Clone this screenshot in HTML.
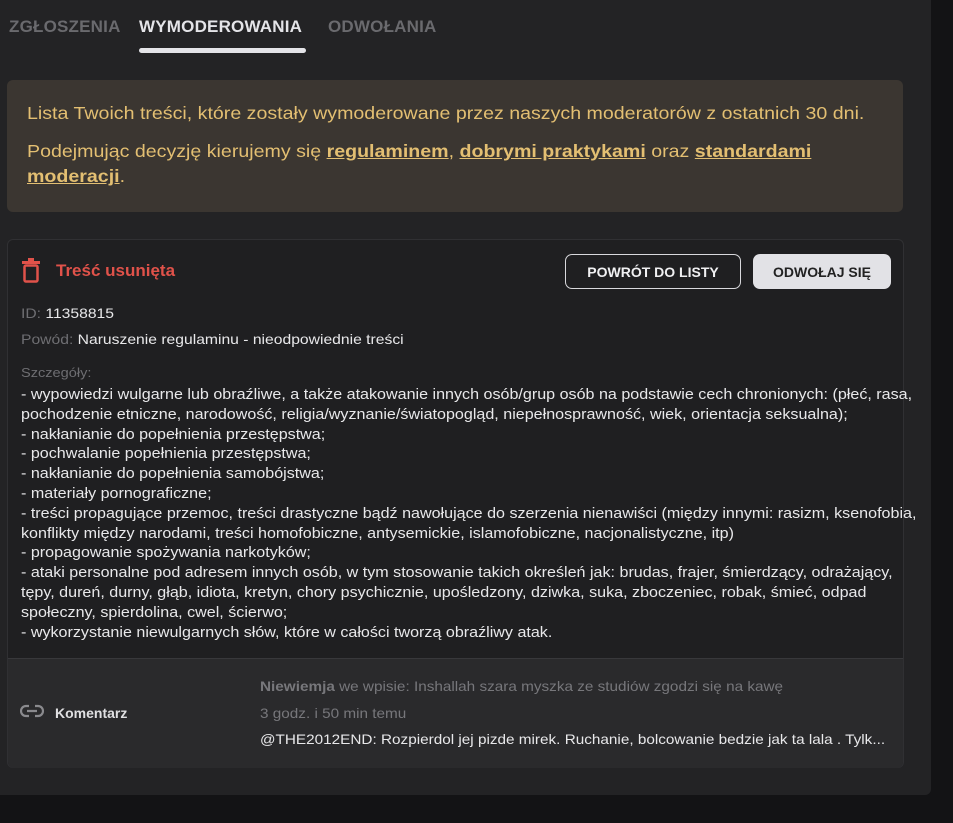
<!DOCTYPE html>
<html><head><meta charset="utf-8"><style>
*{margin:0;padding:0;box-sizing:border-box}
body{width:953px;height:823px;background:#131315;font-family:"Liberation Sans",sans-serif;overflow:hidden;position:relative}
.main{position:absolute;left:0;top:0;width:931px;height:795px;background:#232325;border-radius:0 0 6px 0}
.tab{position:absolute;top:17px;font-size:17px;font-weight:bold;color:#6a6a6e;letter-spacing:0.2px}
.info{position:absolute;left:7px;top:80px;width:896px;height:132px;background:#3b3631;border-radius:6px;color:#e3bf72;font-size:17.5px;padding:21px 20px}
.info p{line-height:25px;margin-bottom:13px;white-space:nowrap;transform:scaleX(1.12);transform-origin:left}
.info a{color:#e3bf72;font-weight:bold;text-decoration:underline}
.card{position:absolute;left:7px;top:239px;width:897px;height:529px;background:#1f1f21;border:1px solid #303033;border-radius:6px}
.title{position:absolute;left:48px;top:21px;color:#e0524a;font-size:17px;font-weight:bold}
.btn{position:absolute;top:14px;height:35px;border-radius:7px;font-size:14px;font-weight:bold;display:flex;align-items:center;justify-content:center}
.row{position:absolute;left:13px;font-size:14px;color:#e8e8ea;white-space:nowrap;transform:scaleX(1.12);transform-origin:left}
.lbl{color:#6e6e72}
.det{position:absolute;left:13px;top:146px;font-size:14.5px;color:#e8e8ea;line-height:19.8px;white-space:nowrap;transform:scaleX(1.11);transform-origin:left}
.com{position:absolute;left:0;top:418px;width:895px;height:110px;background:#2a2a2c;border-top:1px solid #38383b;border-radius:0 0 6px 6px}
.ct{position:absolute;left:252px;font-size:14px;white-space:nowrap;transform:scaleX(1.093);transform-origin:left}
</style></head><body>
<div class="main">
<div class="tab" style="left:9px">ZGŁOSZENIA</div>
<div class="tab" style="left:139px;color:#e4e4e8">WYMODEROWANIA</div>
<div style="position:absolute;left:139px;top:48px;width:167px;height:5px;background:#e4e4e8;border-radius:3px"></div>
<div class="tab" style="left:328px">ODWOŁANIA</div>
<div class="info">
<p>Lista Twoich treści, które zostały wymoderowane przez naszych moderatorów z ostatnich 30 dni.</p>
<p style="margin-bottom:0">Podejmując decyzję kierujemy się <a>regulaminem</a>, <a>dobrymi praktykami</a> oraz <a>standardami</a></p>
<p><a>moderacji</a>.</p>
</div>
<div class="card">
<svg style="position:absolute;left:13px;top:18px" width="22" height="26" viewBox="0 0 22 26"><rect x="1" y="3" width="18" height="3" fill="#e0524a"/><rect x="7" y="0" width="6" height="3" fill="#e0524a"/><rect x="3.5" y="7.5" width="13" height="16" rx="1.5" fill="none" stroke="#e0524a" stroke-width="2.5"/></svg>
<div class="title">Treść usunięta</div>
<div class="btn" style="left:557px;width:176px;border:1px solid #d8d8dc;color:#f0f0f2">POWRÓT DO LISTY</div>
<div class="btn" style="left:745px;width:138px;background:#e2e2e6;color:#222">ODWOŁAJ SIĘ</div>
<div class="row" style="top:65px"><span class="lbl">ID:</span> 11358815</div>
<div class="row" style="top:91px"><span class="lbl">Powód:</span> Naruszenie regulaminu - nieodpowiednie treści</div>
<div class="row" style="top:125px;font-size:13px;color:#6e6e72">Szczegóły:</div>
<div class="det">- wypowiedzi wulgarne lub obraźliwe, a także atakowanie innych osób/grup osób na podstawie cech chronionych: (płeć, rasa,<br>pochodzenie etniczne, narodowość, religia/wyznanie/światopogląd, niepełnosprawność, wiek, orientacja seksualna);<br>- nakłanianie do popełnienia przestępstwa;<br>- pochwalanie popełnienia przestępstwa;<br>- nakłanianie do popełnienia samobójstwa;<br>- materiały pornograficzne;<br>- treści propagujące przemoc, treści drastyczne bądź nawołujące do szerzenia nienawiści (między innymi: rasizm, ksenofobia,<br>konflikty między narodami, treści homofobiczne, antysemickie, islamofobiczne, nacjonalistyczne, itp)<br>- propagowanie spożywania narkotyków;<br>- ataki personalne pod adresem innych osób, w tym stosowanie takich określeń jak: brudas, frajer, śmierdzący, odrażający,<br>tępy, dureń, durny, głąb, idiota, kretyn, chory psychicznie, upośledzony, dziwka, suka, zboczeniec, robak, śmieć, odpad<br>społeczny, spierdolina, cwel, ścierwo;<br>- wykorzystanie niewulgarnych słów, które w całości tworzą obraźliwy atak.</div>
<div class="com">
<svg style="position:absolute;left:12px;top:45px" width="24" height="14" viewBox="0 0 24 14"><path d="M9 2H6a5 5 0 0 0 0 10h3M15 2h3a5 5 0 0 1 0 10h-3M7 7h10" fill="none" stroke="#8a8a8e" stroke-width="2.2"/></svg>
<div style="position:absolute;left:47px;top:46px;font-size:14px;font-weight:bold;color:#e0e0e2">Komentarz</div>
<div class="ct" style="top:19px;color:#77777b"><b>Niewiemja</b> we wpisie: Inshallah szara myszka ze studiów zgodzi się na kawę</div>
<div class="ct" style="top:46px;color:#77777b">3 godz. i 50 min temu</div>
<div class="ct" style="top:72px;color:#e8e8ea">@THE2012END: Rozpierdol jej pizde mirek. Ruchanie, bolcowanie bedzie jak ta lala . Tylk...</div>
</div>
</div>
</div>
</body></html>
